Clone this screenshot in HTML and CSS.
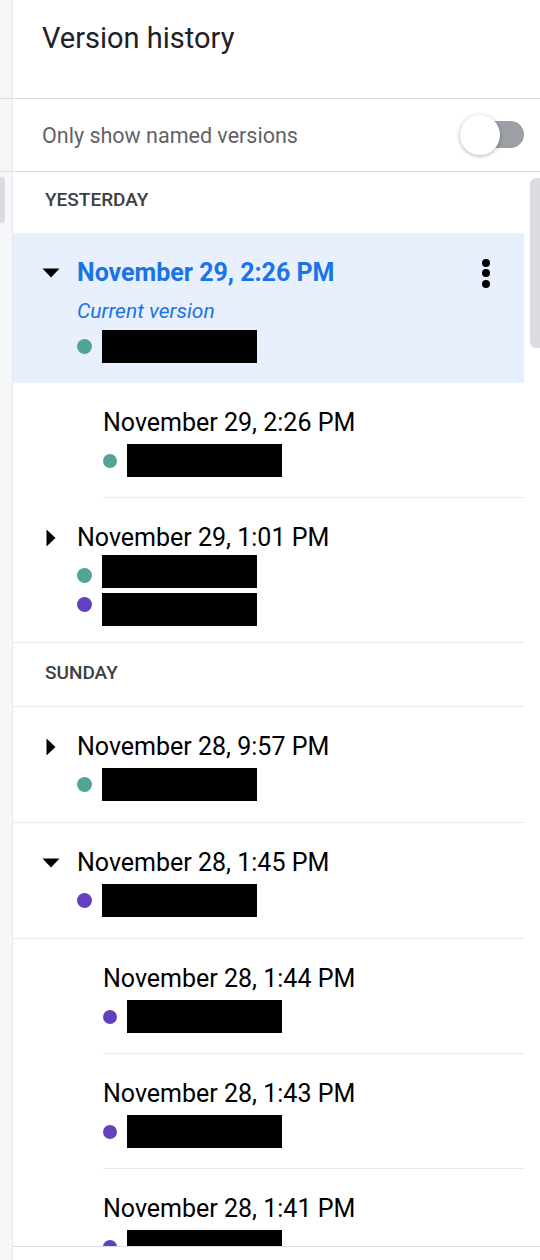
FILE: index.html
```html
<!DOCTYPE html>
<html lang="en">
<head>
  <meta charset="UTF-8">
  <meta name="viewport" content="width=device-width, initial-scale=1.0">
  <title>Version history</title>
  <link rel="stylesheet" href="styles.css">
</head>
<body>

<div class="top">
  <h1 class="title">Version history</h1>
</div>

<div class="filter">
  <div class="filter-in">
    <span class="filter-label">Only show named versions</span>
    <span class="switch">
      <span class="switch-track"></span>
      <span class="switch-thumb"></span>
    </span>
  </div>
</div>

<div class="main">
  <div class="gutter"><div class="gutter-thumb"></div></div>

  <div class="list">
    <div class="day first">Yesterday</div>

    <div class="version selected">
      <span class="caret">
        <svg width="18" height="18" viewBox="0 0 18 18"><polygon points="0.5,4.5 17.5,4.5 9,13.5"/></svg>
      </span>
      <div class="info">
        <div class="when">November 29, 2:26 PM</div>
        <div class="sub">Current version</div>
        <div class="authors">
          <div class="author"><span class="dot teal"></span><span class="redact"></span></div>
        </div>
      </div>
      <span class="more"><i></i><i></i><i></i></span>
    </div>

    <div class="version child">
      <div class="info">
        <div class="when">November 29, 2:26 PM</div>
        <div class="authors">
          <div class="author"><span class="dot teal"></span><span class="redact"></span></div>
        </div>
      </div>
    </div>

    <div class="version">
      <span class="caret">
        <svg width="18" height="18" viewBox="0 0 18 18"><polygon points="4.5,0.5 13.5,9 4.5,17.5"/></svg>
      </span>
      <div class="info">
        <div class="when">November 29, 1:01 PM</div>
        <div class="authors">
          <div class="author"><span class="dot teal"></span><span class="redact"></span></div>
          <div class="author"><span class="dot purple"></span><span class="redact"></span></div>
        </div>
      </div>
    </div>

    <div class="day">Sunday</div>

    <div class="version">
      <span class="caret">
        <svg width="18" height="18" viewBox="0 0 18 18"><polygon points="4.5,0.5 13.5,9 4.5,17.5"/></svg>
      </span>
      <div class="info">
        <div class="when">November 28, 9:57 PM</div>
        <div class="authors">
          <div class="author"><span class="dot teal"></span><span class="redact"></span></div>
        </div>
      </div>
    </div>

    <div class="version">
      <span class="caret">
        <svg width="18" height="18" viewBox="0 0 18 18"><polygon points="0.5,4.5 17.5,4.5 9,13.5"/></svg>
      </span>
      <div class="info">
        <div class="when">November 28, 1:45 PM</div>
        <div class="authors">
          <div class="author"><span class="dot purple"></span><span class="redact"></span></div>
        </div>
      </div>
    </div>

    <div class="version child">
      <div class="info">
        <div class="when">November 28, 1:44 PM</div>
        <div class="authors">
          <div class="author"><span class="dot purple"></span><span class="redact"></span></div>
        </div>
      </div>
    </div>

    <div class="version child">
      <div class="info">
        <div class="when">November 28, 1:43 PM</div>
        <div class="authors">
          <div class="author"><span class="dot purple"></span><span class="redact"></span></div>
        </div>
      </div>
    </div>

    <div class="version child">
      <div class="info">
        <div class="when">November 28, 1:41 PM</div>
        <div class="authors">
          <div class="author"><span class="dot purple"></span><span class="redact"></span></div>
        </div>
      </div>
    </div>
  </div>

  <div class="scroll"><div class="scroll-thumb"></div></div>
</div>

<div class="foot"></div>

</body>
</html>
```

FILE: styles.css
```css
body {
  margin: 0;
  height: 1260px;
  overflow: hidden;
  background: #f6f7f8;
  font-family: Roboto, 'Liberation Sans', sans-serif;
  color: #202124;
}

/* header rows run under the gutter, the panel starts at 12px */
.top {
  height: 99px;
  box-sizing: border-box;
  border-bottom: 1px solid #dadce0;
}
.title {
  margin: 0 0 0 12px;
  height: 100%;
  box-sizing: border-box;
  padding: 20px 0 0 29px;
  background: #fff;
  border-left: 1px solid #e6e8eb;
  font-size: 29px;
  font-weight: 400;
  line-height: 36px;
}

.filter {
  height: 73px;
  box-sizing: border-box;
  border-bottom: 1px solid #dadce0;
}
.filter-in {
  height: 100%;
  margin-left: 12px;
  padding: 0 16px 0 29px;
  display: flex;
  align-items: center;
  justify-content: space-between;
  background: #fff;
  border-left: 1px solid #e6e8eb;
}
.filter-label {
  font-size: 21.5px;
  color: #5f6368;
}
.switch {
  position: relative;
  width: 64px;
  height: 40px;
}
.switch-track {
  position: absolute;
  right: 0;
  top: 6px;
  width: 56px;
  height: 27px;
  border-radius: 14px;
  background: #9aa0a6;
}
.switch-thumb {
  position: absolute;
  left: 0;
  top: 0;
  width: 40px;
  height: 40px;
  border-radius: 50%;
  background: #fff;
  box-shadow: 0 1px 4px rgba(0,0,0,0.3);
}

.main {
  display: flex;
  height: 1074px;
}
.gutter {
  width: 12px;
  flex-shrink: 0;
}
.gutter-thumb {
  margin-top: 5px;
  width: 5px;
  height: 46px;
  border-radius: 0 4px 4px 0;
  background: #dadce0;
}
.list {
  flex: 1;
  overflow: hidden;
  background: #fff;
  border-left: 1px solid #e6e8eb;
}
.scroll {
  width: 16px;
  flex-shrink: 0;
  background: #fff;
}
.scroll-thumb {
  margin: 6px 0 0 6px;
  width: 10px;
  height: 170px;
  border-radius: 6px 0 0 6px;
  background: #dadce0;
}

.day {
  height: 64px;
  box-sizing: border-box;
  padding: 0 0 3px 32px;
  line-height: 60px;
  font-size: 19px;
  font-weight: 500;
  text-transform: uppercase;
  color: #3c4043;
  border-bottom: 1px solid #e8eaed;
}
.day.first {
  height: 61px;
  line-height: 55px;
  padding-bottom: 6px;
  border-bottom: 0;
}

.version {
  display: flex;
  padding: 24px 0 23px;
  border-bottom: 1px solid #e8eaed;
}
.version.selected {
  padding-bottom: 22px;
  background: #e8f0fe;
  border-bottom: 0;
}
.version.child {
  padding: 0 0 0 90px;
  border-bottom: 0;
}
.child .info {
  flex: 1;
  padding: 24px 0 22px;
  border-bottom: 1px solid #e8eaed;
}

.caret {
  width: 64px;
  height: 32px;
  flex-shrink: 0;
  box-sizing: border-box;
  padding-left: 29px;
  display: flex;
  align-items: center;
}
.caret svg {
  fill: #000;
}

.when {
  font-size: 25px;
  line-height: 32px;
  color: #000;
}
.selected .when {
  font-weight: 700;
  color: #1a73e8;
}
.sub {
  margin-top: 8px;
  font-size: 21px;
  font-style: italic;
  line-height: 28px;
  color: #1a73e8;
}

.authors {
  margin-top: 7px;
}
.author {
  display: flex;
  align-items: center;
  height: 29px;
}
.dot {
  width: 15px;
  height: 15px;
  border-radius: 50%;
}
.dot.teal { background: #52a596; }
.dot.purple { background: #6341be; }
.child .dot { width: 14px; height: 14px; }
.redact {
  width: 155px;
  height: 33px;
  margin-left: 10px;
  flex-shrink: 0;
  background: #000;
}
/* stacked names keep a small gap between their boxes */
.author:has(+ .author) .redact { margin-bottom: 9px; }
.author + .author .redact { margin-top: 10px; }

.more {
  margin: 0 26px 0 auto;
  width: 24px;
  height: 32px;
  display: flex;
  flex-direction: column;
  align-items: center;
  justify-content: center;
  gap: 2.5px;
}
.more i {
  width: 8px;
  height: 8px;
  border-radius: 50%;
  background: #000;
}

.foot {
  height: 14px;
  margin-left: 12px;
  background: #fff;
  border-left: 1px solid #e6e8eb;
  border-top: 1px solid #dadce0;
  box-sizing: border-box;
}
```
